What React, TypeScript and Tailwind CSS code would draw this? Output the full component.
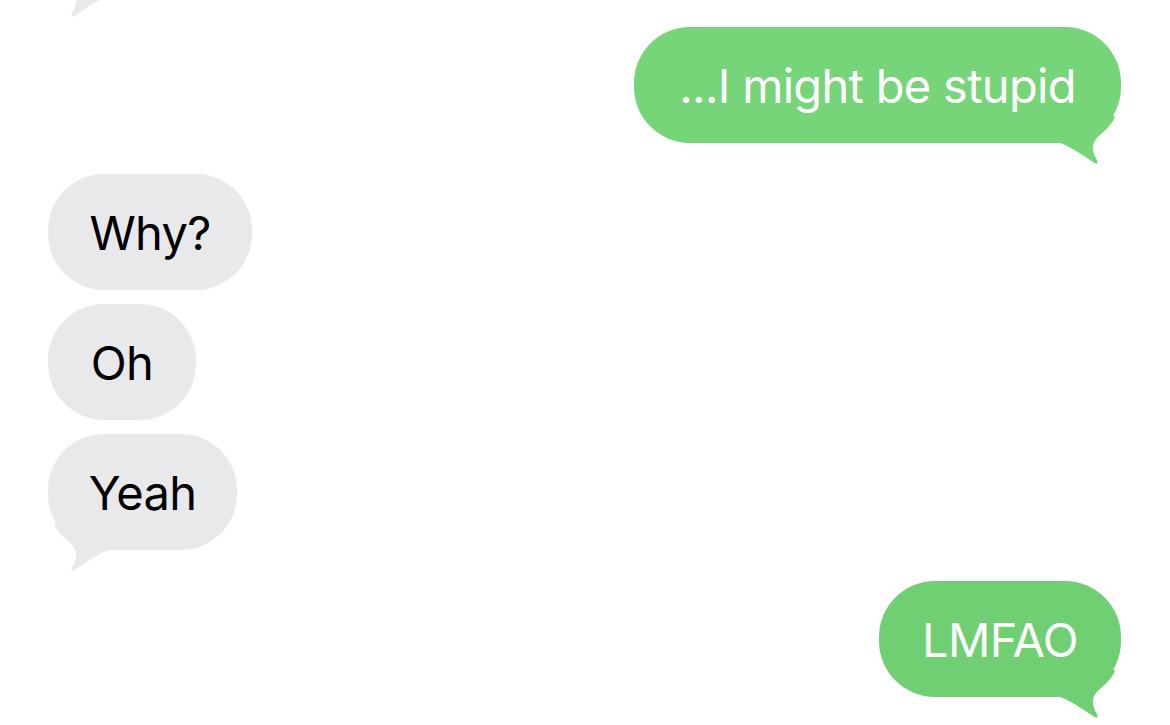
import React from "react";

type BubbleProps = {
  text: string;
  sent?: boolean;
  width: number;
  tail?: boolean;
  className?: string;
  color?: string;
};

function Tail({ sent, color }: { sent?: boolean; color: string }) {
  return (
    <svg
      width="70"
      height="60"
      viewBox="0 0 70 60"
      className={
        sent
          ? "absolute right-0 bottom-[-22px]"
          : "absolute left-0 bottom-[-22px] -scale-x-100"
      }
    >
      <path
        d="M0 0 L0 38 L9 38 C19 41 34 52 42 57 Q48 61 46 55 C41 47 39 38 49 30 C55 25 61 19 64 12 L50 0 Z"
        fill={color}
      />
    </svg>
  );
}

function Bubble({ text, sent, width, tail, className = "", color }: BubbleProps) {
  const bg = color ?? (sent ? "#76d479" : "#e9e9eb");
  return (
    <div
      className={`relative h-[116px] ${sent ? "self-end" : "self-start"} ${className}`}
      style={{ width }}
    >
      <div
        className={`relative z-10 flex h-full w-full items-center justify-center whitespace-nowrap rounded-[56px] text-[47px] leading-none tracking-[-0.7px] font-['Inter','Noto_Sans',sans-serif] ${
          sent ? "text-white" : "text-black"
        }`}
        style={{ backgroundColor: bg }}
      >
        {text}
      </div>
      {tail && <Tail sent={sent} color={bg} />}
    </div>
  );
}

export default function App() {
  return (
    <div className="h-[725px] w-[1170px] overflow-hidden bg-white">
      <div className="flex flex-col pl-[48px] pr-[49px]">
        <Bubble text="" width={170} tail className="-mt-[120px]" />
        <Bubble text="...I might be stupid" sent width={487} tail className="mt-[31px]" />
        <Bubble text="Why?" width={204} className="mt-[31px]" />
        <Bubble text="Oh" width={148} className="mt-[14px]" />
        <Bubble text="Yeah" width={189} tail className="mt-[14px]" />
        <Bubble text="LMFAO" sent width={242} tail color="#6fcf72" className="mt-[31px]" />
      </div>
    </div>
  );
}
